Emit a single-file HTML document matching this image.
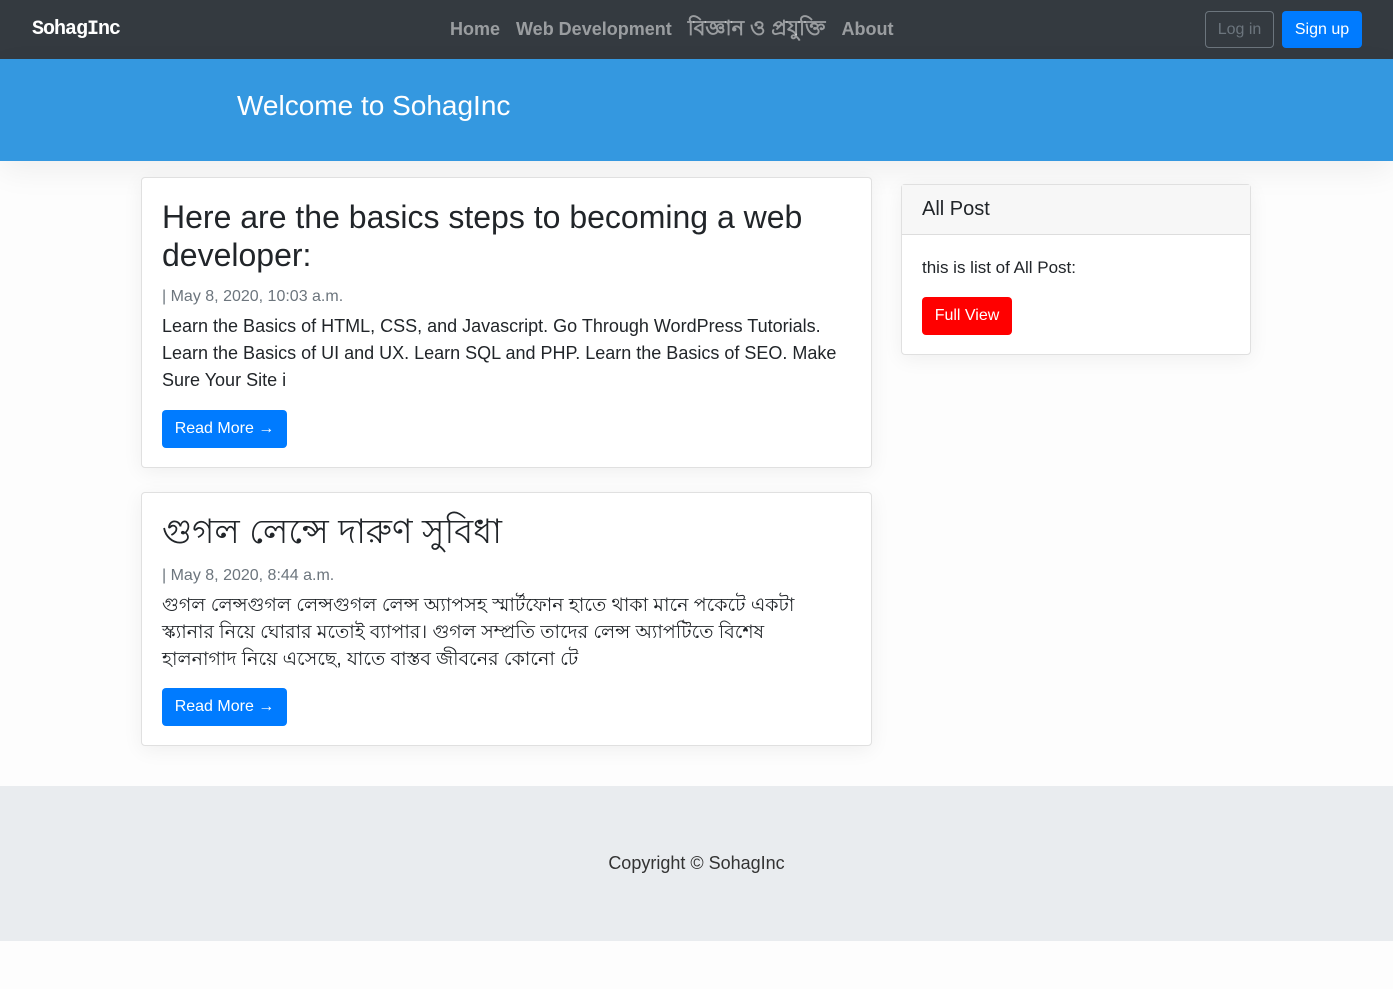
<!DOCTYPE html>
<html><head><meta charset="utf-8"><style>
*{box-sizing:border-box;margin:0;padding:0}
body{width:1393px;height:989px;background:#fdfdfd;font-family:"Liberation Sans",sans-serif;color:#212529;position:relative;overflow:hidden}
.nav{position:absolute;left:0;top:0;width:1393px;height:59px;background:#343a40}
.brand{position:absolute;left:32px;top:18px;color:#fff;font-family:"Liberation Mono",monospace;font-size:20px;font-weight:bold;letter-spacing:-1px}
.links{position:absolute;left:450px;top:9px;line-height:40px;height:40px;color:rgba(255,255,255,.5);font-size:18px;font-weight:bold;white-space:nowrap}
.links span{margin-right:16px;vertical-align:top}
.btn{position:absolute;border-radius:4px;font-size:16px;text-align:center}
.hero{position:absolute;left:0;top:59px;width:1393px;height:102px;background:#3498e0;box-shadow:0 10px 30px rgba(0,0,0,.06)}
.hero h1{position:absolute;left:237px;top:31px;color:#fff;font-weight:normal;font-size:28px}
.card{position:absolute;background:#fff;border:1px solid rgba(0,0,0,.12);border-radius:4px;box-shadow:0 4px 20px rgba(0,0,0,.06)}
.card h2{font-weight:normal;font-size:32px;line-height:38px}
.meta{color:#6c757d;font-size:16px}
.txt{font-size:18px;line-height:27px;width:680px}
.rm{position:absolute;background:#007bff;color:#fff;border-radius:4px;font-size:16px;width:125px;height:38px;line-height:38px;text-align:center}
.foot{position:absolute;left:0;top:786px;width:1393px;height:155px;background:#e9ecef;text-align:center;font-size:18px;color:#333;padding-top:67px}
</style></head><body>
<div class="nav">
<div class="brand">SohagInc</div>
<div class="links"><span>Home</span><span>Web Development</span><span style="font-size:21px">বিজ্ঞান ও প্রযুক্তি</span><span>About</span></div>
<div class="btn" style="left:1205px;top:11px;width:69px;height:37px;line-height:35px;border:1px solid #6c757d;color:#6c757d">Log in</div>
<div class="btn" style="left:1282px;top:11px;width:80px;height:37px;line-height:37px;background:#007bff;color:#fff">Sign up</div>
</div>
<div class="hero"><h1>Welcome to SohagInc</h1></div>
<div class="card" style="left:141px;top:177px;width:731px;height:291px;padding:20px">
<h2>Here are the basics steps to becoming a web developer:</h2>
<div class="meta" style="margin-top:14px">| May 8, 2020, 10:03 a.m.</div>
<div class="txt" style="margin-top:7px">Learn the Basics of HTML, CSS, and Javascript. Go Through WordPress Tutorials. Learn the Basics of UI and UX. Learn SQL and PHP. Learn the Basics of SEO. Make Sure Your Site i</div>
<div class="rm" style="left:20px;top:232px">Read More →</div>
</div>
<div class="card" style="left:141px;top:492px;width:731px;height:254px;padding:20px">
<h2 style="font-size:34px">গুগল লেন্সে দারুণ সুবিধা</h2>
<div class="meta" style="margin-top:16px">| May 8, 2020, 8:44 a.m.</div>
<div class="txt" style="margin-top:7px;font-size:19px;width:655px">গুগল লেন্সগুগল লেন্সগুগল লেন্স অ্যাপসহ স্মার্টফোন হাতে থাকা মানে পকেটে একটা স্ক্যানার নিয়ে ঘোরার মতোই ব্যাপার। গুগল সম্প্রতি তাদের লেন্স অ্যাপটিতে বিশেষ হালনাগাদ নিয়ে এসেছে, যাতে বাস্তব জীবনের কোনো টে</div>
<div class="rm" style="left:20px;top:195px">Read More →</div>
</div>
<div class="card" style="left:901px;top:184px;width:350px;height:171px">
<div style="height:50px;background:#f7f7f7;border-bottom:1px solid rgba(0,0,0,.1);padding:13px 20px;font-size:20px">All Post</div>
<div style="padding:23px 20px;font-size:17px">this is list of All Post:</div>
<div class="btn" style="left:20px;top:112px;width:90px;height:38px;line-height:38px;background:#f00;color:#fff">Full View</div>
</div>
<div class="foot">Copyright © SohagInc</div>
</body></html>
